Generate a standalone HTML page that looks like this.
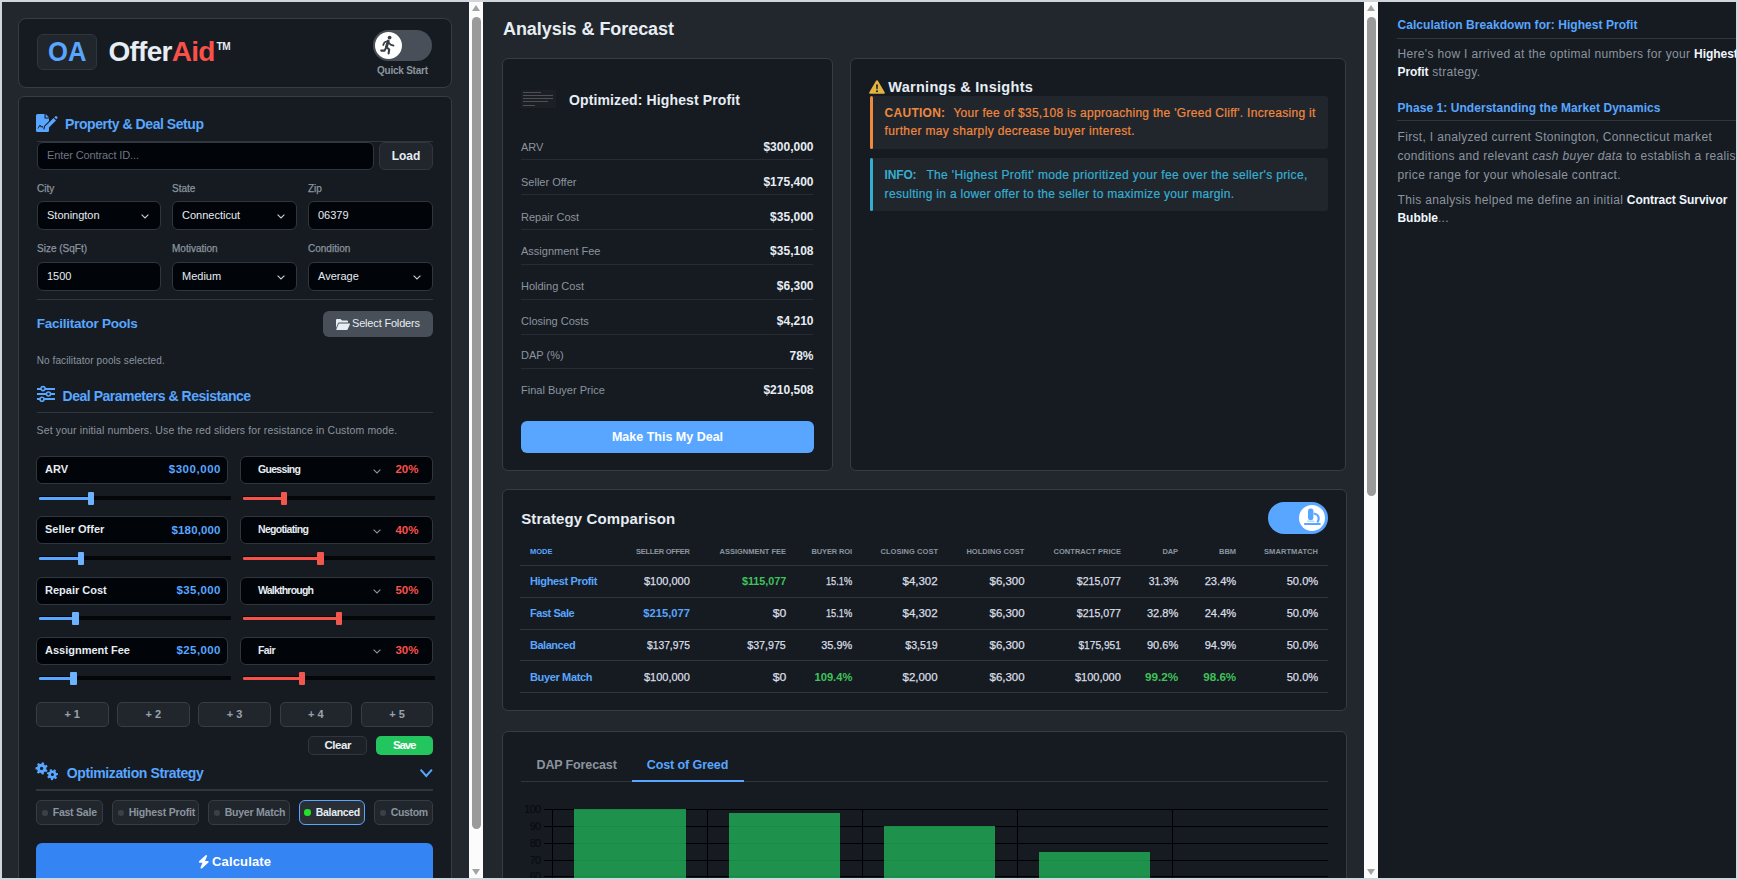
<!DOCTYPE html>
<html><head><meta charset="utf-8">
<style>
*{box-sizing:border-box;margin:0;padding:0}
html,body{width:1738px;height:880px;overflow:hidden}
body{background:#d1d6dd;font-family:"Liberation Sans",sans-serif;position:relative;color:#e6edf3}
.a{position:absolute}
.t{position:absolute;white-space:nowrap;line-height:1}
.sb{position:absolute;top:2px;width:14px;height:876px;background:#fcfcfc}
.thumb{position:absolute;left:3px;width:9px;border-radius:5px;background:#9a9a9a}
.up{position:absolute;left:3px;top:3px;width:0;height:0;border-left:4px solid transparent;border-right:4px solid transparent;border-bottom:6px solid #a3a3a3}
.dn{position:absolute;left:3px;bottom:3px;width:0;height:0;border-left:4px solid transparent;border-right:4px solid transparent;border-top:6px solid #a3a3a3}
.card{position:absolute;background:#161b22;border:1px solid #363c44;border-radius:8px}
svg{position:absolute;overflow:visible}
</style></head>
<body>

<div class="a" style="left:2px;top:2px;width:467px;height:876px;background:#22272e"></div>
<div class="a" style="left:483px;top:2px;width:881px;height:876px;background:#22272e"></div>
<div class="a" style="left:1378px;top:2px;width:358px;height:876px;background:#161b22"></div>
<div class="card" style="left:18px;top:18px;width:434px;height:70px"></div>
<div class="a" style="left:37px;top:34px;width:60px;height:36px;background:#21262d;border:1px solid #30363d;border-radius:6px"></div>
<div class="t" style="top:37.90px;font-size:28px;color:#58a6ff;font-weight:700;left:47.5px;transform:scaleX(0.915);transform-origin:0 0">OA</div>
<div class="t" style="top:37.90px;font-size:28px;color:#e6edf3;font-weight:700;left:108.5px;letter-spacing:-0.75px">Offer<span style="color:#f85149">Aid</span></div>
<div class="t" style="top:41.53px;font-size:10px;color:#e6edf3;font-weight:700;left:216.5px;letter-spacing:-0.3px">TM</div>
<div class="a" style="left:373px;top:30px;width:59px;height:31px;background:#484f58;border-radius:16px"></div>
<div class="a" style="left:375px;top:32px;width:27px;height:27px;background:#ffffff;border-radius:50%"></div>
<svg style="left:379px;top:34px" width="18" height="22" viewBox="379 34 18 22"><g fill="none" stroke="#3a3f46" stroke-linecap="round" stroke-linejoin="round"><circle cx="389.6" cy="37.6" r="1.9" fill="#3a3f46" stroke="none"/><path d="M388.3 41 L386.4 47" stroke-width="2.8"/><path d="M387.8 41 L384.6 42.2 L383.2 45" stroke-width="1.7"/><path d="M388.4 42.3 L390.6 44.6 L393.6 45.6" stroke-width="1.7"/><path d="M386.6 47.2 L389.2 49.6 L388.6 53.4" stroke-width="2.1"/><path d="M386.2 47.4 L384.6 50.6 L381.2 50.6" stroke-width="2.1"/></g></svg>
<div class="t" style="top:66.33px;font-size:10px;color:#8b949e;font-weight:700;letter-spacing:-0.235px;left:377px;">Quick Start</div>
<div class="card" style="left:18px;top:96px;width:434px;height:900px;border-radius:6px"></div>
<svg style="left:36px;top:114px" width="21" height="18" viewBox="0 0 21 18"><path fill="#58a6ff" d="M0 1.5 Q0 0 1.5 0 H8.5 L8.5 4.5 H13 V7 L8 12 L7.3 15.5 L10.8 14.8 L13 12.6 V16.5 Q13 18 11.5 18 H1.5 Q0 18 0 16.5 Z"/><path fill="#58a6ff" d="M9.6 0 L13 3.4 H9.6 Z"/><path fill="#161b22" d="M2 14.5 L4 11 L5.2 13.2 L6.2 12 L6.6 13.6" stroke="#161b22" stroke-width="0.9" fill-opacity="0"/><path fill="#58a6ff" d="M9 12.6 L17.5 4.1 L20 6.6 L11.5 15.1 L8.4 15.8 Z"/><path fill="#58a6ff" d="M18.3 3.3 L19.4 2.2 Q20 1.7 20.6 2.3 L21.4 3.1 Q21.9 3.7 21.3 4.3 L20.3 5.3 Z"/></svg>
<div class="t" style="top:116.95px;font-size:14px;color:#58a6ff;font-weight:700;letter-spacing:-0.441px;left:65px;">Property &amp; Deal Setup</div>
<div class="a" style="left:37px;top:141px;width:396px;height:1px;background:#30363d"></div>
<div class="a" style="left:37px;top:142px;width:337px;height:28px;background:#010409;border:1px solid #30363d;border-radius:6px"></div>
<div class="t" style="top:150.39px;font-size:11px;color:#6e7681;letter-spacing:-0.113px;left:47px;">Enter Contract ID...</div>
<div class="a" style="left:379px;top:142px;width:54px;height:28px;background:#21262d;border:1px solid #30363d;border-radius:6px"></div>
<div class="t" style="top:149.84px;font-size:12px;color:#e6edf3;font-weight:700;left:406px;transform:translateX(-50%);">Load</div>
<div class="t" style="top:184.13px;font-size:10px;color:#8b949e;left:37px;-webkit-text-stroke:0.25px #8b949e">City</div>
<div class="t" style="top:184.13px;font-size:10px;color:#8b949e;left:172px;-webkit-text-stroke:0.25px #8b949e">State</div>
<div class="t" style="top:184.13px;font-size:10px;color:#8b949e;left:308px;-webkit-text-stroke:0.25px #8b949e">Zip</div>
<div class="t" style="top:243.84px;font-size:10px;color:#8b949e;left:37px;-webkit-text-stroke:0.25px #8b949e">Size (SqFt)</div>
<div class="t" style="top:243.84px;font-size:10px;color:#8b949e;left:172px;-webkit-text-stroke:0.25px #8b949e">Motivation</div>
<div class="t" style="top:243.84px;font-size:10px;color:#8b949e;left:308px;-webkit-text-stroke:0.25px #8b949e">Condition</div>
<div class="a" style="left:37px;top:201px;width:124px;height:29px;background:#010409;border:1px solid #30363d;border-radius:6px"></div>
<div class="t" style="top:209.89px;font-size:11px;color:#e6edf3;left:47px;">Stonington</div>
<svg style="left:140.7px;top:213.8px" width="8" height="4.5" viewBox="0 0 8 4.5"><path d="M0.6 0.6 L4.0 3.9 L7.4 0.6" fill="none" stroke="#c9d1d9" stroke-width="1.1"/></svg>
<div class="a" style="left:172px;top:201px;width:125px;height:29px;background:#010409;border:1px solid #30363d;border-radius:6px"></div>
<div class="t" style="top:209.89px;font-size:11px;color:#e6edf3;left:182px;">Connecticut</div>
<svg style="left:276.7px;top:213.8px" width="8" height="4.5" viewBox="0 0 8 4.5"><path d="M0.6 0.6 L4.0 3.9 L7.4 0.6" fill="none" stroke="#c9d1d9" stroke-width="1.1"/></svg>
<div class="a" style="left:308px;top:201px;width:125px;height:29px;background:#010409;border:1px solid #30363d;border-radius:6px"></div>
<div class="t" style="top:209.89px;font-size:11px;color:#e6edf3;left:318px;">06379</div>
<div class="a" style="left:37px;top:262px;width:124px;height:29px;background:#010409;border:1px solid #30363d;border-radius:6px"></div>
<div class="t" style="top:270.89px;font-size:11px;color:#e6edf3;left:47px;">1500</div>
<div class="a" style="left:172px;top:262px;width:125px;height:29px;background:#010409;border:1px solid #30363d;border-radius:6px"></div>
<div class="t" style="top:270.89px;font-size:11px;color:#e6edf3;left:182px;">Medium</div>
<svg style="left:276.7px;top:274.8px" width="8" height="4.5" viewBox="0 0 8 4.5"><path d="M0.6 0.6 L4.0 3.9 L7.4 0.6" fill="none" stroke="#c9d1d9" stroke-width="1.1"/></svg>
<div class="a" style="left:308px;top:262px;width:125px;height:29px;background:#010409;border:1px solid #30363d;border-radius:6px"></div>
<div class="t" style="top:270.89px;font-size:11px;color:#e6edf3;left:318px;">Average</div>
<svg style="left:412.7px;top:274.8px" width="8" height="4.5" viewBox="0 0 8 4.5"><path d="M0.6 0.6 L4.0 3.9 L7.4 0.6" fill="none" stroke="#c9d1d9" stroke-width="1.1"/></svg>
<div class="a" style="left:37px;top:299px;width:396px;height:1px;background:#30363d"></div>
<div class="t" style="top:317.47px;font-size:13.5px;color:#58a6ff;font-weight:700;letter-spacing:-0.251px;left:36.7px;">Facilitator Pools</div>
<div class="a" style="left:323px;top:311px;width:110px;height:26px;background:#484f58;border-radius:6px"></div>
<svg style="left:335.5px;top:318.5px" width="14" height="11" viewBox="0 0 14 11"><path fill="#e6edf3" d="M0 1 Q0 0 1 0 H4.5 L6 1.5 H11 Q12 1.5 12 2.5 V3.5 H3.2 Q2.4 3.5 2 4.3 L0 9 Z"/><path fill="#e6edf3" d="M3.2 4.5 H13.6 Q14.3 4.5 14 5.2 L11.6 10.4 Q11.3 11 10.6 11 H0.6 Q0 11 0.3 10.4 L2.5 5.1 Q2.8 4.5 3.2 4.5 Z"/></svg>
<div class="t" style="top:318.39px;font-size:11px;color:#e6edf3;letter-spacing:-0.178px;left:352px;">Select Folders</div>
<div class="t" style="top:356.04px;font-size:10px;color:#8b949e;letter-spacing:0.101px;left:36.7px;">No facilitator pools selected.</div>
<svg style="left:37px;top:386px" width="18" height="16" viewBox="0 0 18 16"><g fill="none" stroke="#58a6ff" stroke-width="2"><path d="M0 3 H18 M0 8 H18 M0 13 H18"/></g><g fill="#161b22" stroke="#58a6ff" stroke-width="1.6"><circle cx="6" cy="2.6" r="2"/><circle cx="11.5" cy="8" r="2"/><circle cx="5" cy="13.2" r="2"/></g></svg>
<div class="t" style="top:388.95px;font-size:14px;color:#58a6ff;font-weight:700;letter-spacing:-0.484px;left:62.6px;">Deal Parameters &amp; Resistance</div>
<div class="a" style="left:37px;top:412px;width:396px;height:1px;background:#30363d"></div>
<div class="t" style="top:425.41px;font-size:10.5px;color:#8b949e;letter-spacing:0.122px;left:36.6px;">Set your initial numbers. Use the red sliders for resistance in Custom mode.</div>
<div class="a" style="left:36px;top:456.0px;width:192px;height:28px;background:#010409;border:1px solid #30363d;border-radius:6px"></div>
<div class="t" style="top:463.99px;font-size:11px;color:#e6edf3;font-weight:700;left:45px;">ARV</div>
<div class="t" style="top:464.27px;font-size:11.5px;color:#58a6ff;font-weight:700;letter-spacing:0.548px;right:1516.95px;">$300,000</div>
<div class="a" style="left:240px;top:456.0px;width:193px;height:28px;background:#010409;border:1px solid #30363d;border-radius:6px"></div>
<div class="t" style="top:464.01px;font-size:10.5px;color:#e6edf3;font-weight:700;letter-spacing:-0.692px;left:258px;">Guessing</div>
<svg style="left:372.5px;top:468.5px" width="8" height="4.5" viewBox="0 0 8 4.5"><path d="M0.6 0.6 L4.0 3.9 L7.4 0.6" fill="none" stroke="#8b949e" stroke-width="1.1"/></svg>
<div class="t" style="top:464.47px;font-size:11.5px;color:#f85149;font-weight:700;right:1319.50px;">20%</div>
<div class="a" style="left:39px;top:496.0px;width:191.5px;height:4px;background:#050608;border-radius:1px"></div>
<div class="a" style="left:39px;top:496.5px;width:52px;height:3px;background:#58a6ff;border-radius:1px"></div>
<div class="a" style="left:87.8px;top:491.5px;width:6.5px;height:13px;background:#6cb2ff;border-radius:1px"></div>
<div class="a" style="left:243px;top:496.0px;width:191.5px;height:4px;background:#050608;border-radius:1px"></div>
<div class="a" style="left:243px;top:496.5px;width:41px;height:3px;background:#f85149;border-radius:1px"></div>
<div class="a" style="left:280.8px;top:491.5px;width:6.5px;height:13px;background:#f2574e;border-radius:1px"></div>
<div class="a" style="left:36px;top:516.3px;width:192px;height:28px;background:#010409;border:1px solid #30363d;border-radius:6px"></div>
<div class="t" style="top:524.29px;font-size:11px;color:#e6edf3;font-weight:700;left:45px;">Seller Offer</div>
<div class="t" style="top:524.57px;font-size:11.5px;color:#58a6ff;font-weight:700;letter-spacing:0.148px;right:1517.35px;">$180,000</div>
<div class="a" style="left:240px;top:516.3px;width:193px;height:28px;background:#010409;border:1px solid #30363d;border-radius:6px"></div>
<div class="t" style="top:524.31px;font-size:10.5px;color:#e6edf3;font-weight:700;letter-spacing:-0.675px;left:258px;">Negotiating</div>
<svg style="left:372.5px;top:528.8px" width="8" height="4.5" viewBox="0 0 8 4.5"><path d="M0.6 0.6 L4.0 3.9 L7.4 0.6" fill="none" stroke="#8b949e" stroke-width="1.1"/></svg>
<div class="t" style="top:524.77px;font-size:11.5px;color:#f85149;font-weight:700;right:1319.50px;">40%</div>
<div class="a" style="left:39px;top:556.1px;width:191.5px;height:4px;background:#050608;border-radius:1px"></div>
<div class="a" style="left:39px;top:556.6px;width:42px;height:3px;background:#58a6ff;border-radius:1px"></div>
<div class="a" style="left:77.8px;top:551.6px;width:6.5px;height:13px;background:#6cb2ff;border-radius:1px"></div>
<div class="a" style="left:243px;top:556.1px;width:191.5px;height:4px;background:#050608;border-radius:1px"></div>
<div class="a" style="left:243px;top:556.6px;width:77.5px;height:3px;background:#f85149;border-radius:1px"></div>
<div class="a" style="left:317.3px;top:551.6px;width:6.5px;height:13px;background:#f2574e;border-radius:1px"></div>
<div class="a" style="left:36px;top:576.6px;width:192px;height:28px;background:#010409;border:1px solid #30363d;border-radius:6px"></div>
<div class="t" style="top:584.59px;font-size:11px;color:#e6edf3;font-weight:700;left:45px;">Repair Cost</div>
<div class="t" style="top:584.87px;font-size:11.5px;color:#58a6ff;font-weight:700;letter-spacing:0.405px;right:1517.10px;">$35,000</div>
<div class="a" style="left:240px;top:576.6px;width:193px;height:28px;background:#010409;border:1px solid #30363d;border-radius:6px"></div>
<div class="t" style="top:584.61px;font-size:10.5px;color:#e6edf3;font-weight:700;letter-spacing:-0.777px;left:258px;">Walkthrough</div>
<svg style="left:372.5px;top:589.1px" width="8" height="4.5" viewBox="0 0 8 4.5"><path d="M0.6 0.6 L4.0 3.9 L7.4 0.6" fill="none" stroke="#8b949e" stroke-width="1.1"/></svg>
<div class="t" style="top:585.07px;font-size:11.5px;color:#f85149;font-weight:700;right:1319.50px;">50%</div>
<div class="a" style="left:39px;top:616.2px;width:191.5px;height:4px;background:#050608;border-radius:1px"></div>
<div class="a" style="left:39px;top:616.7px;width:36.5px;height:3px;background:#58a6ff;border-radius:1px"></div>
<div class="a" style="left:72.3px;top:611.7px;width:6.5px;height:13px;background:#6cb2ff;border-radius:1px"></div>
<div class="a" style="left:243px;top:616.2px;width:191.5px;height:4px;background:#050608;border-radius:1px"></div>
<div class="a" style="left:243px;top:616.7px;width:96px;height:3px;background:#f85149;border-radius:1px"></div>
<div class="a" style="left:335.8px;top:611.7px;width:6.5px;height:13px;background:#f2574e;border-radius:1px"></div>
<div class="a" style="left:36px;top:636.9px;width:192px;height:28px;background:#010409;border:1px solid #30363d;border-radius:6px"></div>
<div class="t" style="top:644.89px;font-size:11px;color:#e6edf3;font-weight:700;left:45px;">Assignment Fee</div>
<div class="t" style="top:645.17px;font-size:11.5px;color:#58a6ff;font-weight:700;letter-spacing:0.405px;right:1517.10px;">$25,000</div>
<div class="a" style="left:240px;top:636.9px;width:193px;height:28px;background:#010409;border:1px solid #30363d;border-radius:6px"></div>
<div class="t" style="top:644.91px;font-size:10.5px;color:#e6edf3;font-weight:700;letter-spacing:-0.586px;left:258px;">Fair</div>
<svg style="left:372.5px;top:649.4px" width="8" height="4.5" viewBox="0 0 8 4.5"><path d="M0.6 0.6 L4.0 3.9 L7.4 0.6" fill="none" stroke="#8b949e" stroke-width="1.1"/></svg>
<div class="t" style="top:645.37px;font-size:11.5px;color:#f85149;font-weight:700;right:1319.50px;">30%</div>
<div class="a" style="left:39px;top:676.3px;width:191.5px;height:4px;background:#050608;border-radius:1px"></div>
<div class="a" style="left:39px;top:676.8px;width:34.5px;height:3px;background:#58a6ff;border-radius:1px"></div>
<div class="a" style="left:70.3px;top:671.8px;width:6.5px;height:13px;background:#6cb2ff;border-radius:1px"></div>
<div class="a" style="left:243px;top:676.3px;width:191.5px;height:4px;background:#050608;border-radius:1px"></div>
<div class="a" style="left:243px;top:676.8px;width:59px;height:3px;background:#f85149;border-radius:1px"></div>
<div class="a" style="left:298.8px;top:671.8px;width:6.5px;height:13px;background:#f2574e;border-radius:1px"></div>
<div class="a" style="left:36.0px;top:702px;width:72.5px;height:25px;background:#21262d;border:1px solid #373d45;border-radius:5px"></div>
<div class="t" style="top:709.19px;font-size:11px;color:#9aa3ad;font-weight:700;left:72.2px;transform:translateX(-50%);">+ 1</div>
<div class="a" style="left:117.2px;top:702px;width:72.5px;height:25px;background:#21262d;border:1px solid #373d45;border-radius:5px"></div>
<div class="t" style="top:709.19px;font-size:11px;color:#9aa3ad;font-weight:700;left:153.4px;transform:translateX(-50%);">+ 2</div>
<div class="a" style="left:198.4px;top:702px;width:72.5px;height:25px;background:#21262d;border:1px solid #373d45;border-radius:5px"></div>
<div class="t" style="top:709.19px;font-size:11px;color:#9aa3ad;font-weight:700;left:234.60000000000002px;transform:translateX(-50%);">+ 3</div>
<div class="a" style="left:279.6px;top:702px;width:72.5px;height:25px;background:#21262d;border:1px solid #373d45;border-radius:5px"></div>
<div class="t" style="top:709.19px;font-size:11px;color:#9aa3ad;font-weight:700;left:315.8px;transform:translateX(-50%);">+ 4</div>
<div class="a" style="left:360.8px;top:702px;width:72.5px;height:25px;background:#21262d;border:1px solid #373d45;border-radius:5px"></div>
<div class="t" style="top:709.19px;font-size:11px;color:#9aa3ad;font-weight:700;left:397.0px;transform:translateX(-50%);">+ 5</div>
<div class="a" style="left:308px;top:736px;width:59px;height:19px;background:#1c2128;border:1px solid #30363d;border-radius:5px"></div>
<div class="t" style="top:739.77px;font-size:11.5px;color:#e6edf3;font-weight:700;letter-spacing:-0.442px;left:324.5px;">Clear</div>
<div class="a" style="left:376px;top:736px;width:57px;height:19px;background:#23c55e;border-radius:5px"></div>
<div class="t" style="top:739.77px;font-size:11.5px;color:#ffffff;font-weight:700;letter-spacing:-1.120px;left:393px;">Save</div>
<svg style="left:34px;top:761px" width="26" height="21" viewBox="34 761 26 21"><path fill-rule="evenodd" fill="#58a6ff" d="M46.21 769.33 L47.54 770.17 L46.54 772.15 L45.08 771.56 L43.74 772.58 L43.92 774.15 L41.75 774.60 L41.29 773.09 L39.66 772.68 L38.55 773.80 L36.85 772.38 L37.74 771.08 L37.04 769.56 L35.48 769.38 L35.52 767.17 L37.10 767.06 L37.85 765.56 L37.02 764.23 L38.77 762.88 L39.84 764.04 L41.49 763.70 L42.00 762.21 L44.15 762.75 L43.91 764.31 L45.20 765.38 L46.69 764.86 L47.61 766.87 L46.24 767.66 Z M43.30 768.40 A1.7 1.7 0 1 0 39.90 768.40 A1.7 1.7 0 1 0 43.30 768.40 Z"/><path fill-rule="evenodd" fill="#58a6ff" d="M56.09 776.61 L57.05 777.71 L55.66 779.15 L54.53 778.22 L53.12 778.74 L52.87 780.18 L50.88 779.99 L50.90 778.52 L49.62 777.75 L48.33 778.44 L47.24 776.77 L48.40 775.87 L48.21 774.39 L46.86 773.81 L47.49 771.92 L48.91 772.26 L49.95 771.19 L49.56 769.77 L51.43 769.08 L52.05 770.41 L53.54 770.56 L54.40 769.37 L56.11 770.41 L55.45 771.72 L56.27 772.97 L57.74 772.90 L57.99 774.89 L56.56 775.19 Z M53.90 774.60 A1.5 1.5 0 1 0 50.90 774.60 A1.5 1.5 0 1 0 53.90 774.60 Z"/></svg>
<div class="t" style="top:766.15px;font-size:14px;color:#58a6ff;font-weight:700;letter-spacing:-0.384px;left:66.8px;">Optimization Strategy</div>
<svg style="left:420px;top:769px" width="12.5" height="7.5" viewBox="0 0 12.5 7.5"><path d="M0.6 0.6 L6.25 6.9 L11.9 0.6" fill="none" stroke="#58a6ff" stroke-width="2"/></svg>
<div class="a" style="left:36px;top:789px;width:397px;height:1.5px;background:#30363d"></div>
<div class="a" style="left:36px;top:800px;width:66.5px;height:25px;background:#21262d;border:1px solid #363c44;border-radius:5px"></div>
<div class="a" style="left:42px;top:810px;width:5.5px;height:5.5px;background:#3b4048;border-radius:50%"></div>
<div class="t" style="top:807.41px;font-size:10.5px;color:#8b949e;font-weight:700;letter-spacing:-0.226px;left:52.7px;">Fast Sale</div>
<div class="a" style="left:112px;top:800px;width:87px;height:25px;background:#21262d;border:1px solid #363c44;border-radius:5px"></div>
<div class="a" style="left:118px;top:810px;width:5.5px;height:5.5px;background:#3b4048;border-radius:50%"></div>
<div class="t" style="top:807.41px;font-size:10.5px;color:#8b949e;font-weight:700;letter-spacing:-0.172px;left:128.7px;">Highest Profit</div>
<div class="a" style="left:208px;top:800px;width:81.5px;height:25px;background:#21262d;border:1px solid #363c44;border-radius:5px"></div>
<div class="a" style="left:214px;top:810px;width:5.5px;height:5.5px;background:#3b4048;border-radius:50%"></div>
<div class="t" style="top:807.41px;font-size:10.5px;color:#8b949e;font-weight:700;letter-spacing:-0.222px;left:224.7px;">Buyer Match</div>
<div class="a" style="left:299px;top:800px;width:66px;height:25px;background:#2a2f36;border:1.5px solid #58a6ff;border-radius:6px"></div>
<div class="a" style="left:304px;top:809.2px;width:6.5px;height:6.5px;background:#22e32a;border-radius:50%"></div>
<div class="t" style="top:807.41px;font-size:10.5px;color:#e6edf3;font-weight:700;letter-spacing:-0.298px;left:315.7px;">Balanced</div>
<div class="a" style="left:374px;top:800px;width:59px;height:25px;background:#21262d;border:1px solid #363c44;border-radius:5px"></div>
<div class="a" style="left:380px;top:810px;width:5.5px;height:5.5px;background:#3b4048;border-radius:50%"></div>
<div class="t" style="top:807.41px;font-size:10.5px;color:#8b949e;font-weight:700;letter-spacing:-0.317px;left:390.7px;">Custom</div>
<div class="a" style="left:36px;top:843px;width:397px;height:50px;background:#3584f4;border-radius:6px"></div>
<svg style="left:198px;top:854.6px" width="11.5" height="13.6" viewBox="0 0 448 512" preserveAspectRatio="none"><path fill="#fff" d="M349.4 44.6c5.9-13.7 1.4-29.7-10.9-38.3s-28.6-8-40 1.6l-256 224c-10 8.8-13.6 22.9-8.9 35.3S50.7 288 64 288H175.5L98.6 467.4c-5.9 13.7-1.4 29.7 10.9 38.3s28.6 8 40-1.6l256-224c10-8.8 13.6-22.9 8.9-35.3s-16.6-20.7-30-20.7H272.5L349.4 44.6z"/></svg>
<div class="t" style="top:855.00px;font-size:13px;color:#ffffff;font-weight:700;letter-spacing:0.150px;left:212px;">Calculate</div>
<div class="t" style="top:19.96px;font-size:18px;color:#e6edf3;font-weight:700;letter-spacing:-0.060px;left:503px;">Analysis &amp; Forecast</div>
<div class="card" style="left:502px;top:58px;width:331px;height:413px;border-radius:6px"></div>
<div class="a" style="left:521px;top:90px;width:35px;height:18px;background:#1c1f24"></div>
<div class="a" style="left:523px;top:92px;width:18px;height:1.2px;background:#5a5e64;opacity:0.8"></div>
<div class="a" style="left:523px;top:95px;width:30px;height:1.2px;background:#5a5e64;opacity:0.8"></div>
<div class="a" style="left:523px;top:98px;width:30px;height:1.2px;background:#5a5e64;opacity:0.8"></div>
<div class="a" style="left:523px;top:101px;width:25px;height:1.2px;background:#5a5e64;opacity:0.8"></div>
<div class="a" style="left:523px;top:105px;width:12px;height:1.2px;background:#5a5e64;opacity:0.8"></div>
<div class="t" style="top:92.95px;font-size:14px;color:#e6edf3;font-weight:700;letter-spacing:0.125px;left:569px;">Optimized: Highest Profit</div>
<div class="t" style="top:142.09px;font-size:11px;color:#8b949e;left:521px;">ARV</div>
<div class="t" style="top:141.24px;font-size:12px;color:#e6edf3;font-weight:700;right:924.50px;">$300,000</div>
<div class="a" style="left:521px;top:159.0px;width:292px;height:1px;background:#262c34"></div>
<div class="t" style="top:176.81px;font-size:11px;color:#8b949e;left:521px;">Seller Offer</div>
<div class="t" style="top:175.96px;font-size:12px;color:#e6edf3;font-weight:700;right:924.50px;">$175,400</div>
<div class="a" style="left:521px;top:193.9px;width:292px;height:1px;background:#262c34"></div>
<div class="t" style="top:211.53px;font-size:11px;color:#8b949e;left:521px;">Repair Cost</div>
<div class="t" style="top:210.68px;font-size:12px;color:#e6edf3;font-weight:700;right:924.50px;">$35,000</div>
<div class="a" style="left:521px;top:228.8px;width:292px;height:1px;background:#262c34"></div>
<div class="t" style="top:246.25px;font-size:11px;color:#8b949e;left:521px;">Assignment Fee</div>
<div class="t" style="top:245.40px;font-size:12px;color:#e6edf3;font-weight:700;right:924.50px;">$35,108</div>
<div class="a" style="left:521px;top:263.7px;width:292px;height:1px;background:#262c34"></div>
<div class="t" style="top:280.97px;font-size:11px;color:#8b949e;left:521px;">Holding Cost</div>
<div class="t" style="top:280.12px;font-size:12px;color:#e6edf3;font-weight:700;right:924.50px;">$6,300</div>
<div class="a" style="left:521px;top:298.6px;width:292px;height:1px;background:#262c34"></div>
<div class="t" style="top:315.69px;font-size:11px;color:#8b949e;left:521px;">Closing Costs</div>
<div class="t" style="top:314.84px;font-size:12px;color:#e6edf3;font-weight:700;right:924.50px;">$4,210</div>
<div class="a" style="left:521px;top:333.5px;width:292px;height:1px;background:#262c34"></div>
<div class="t" style="top:350.41px;font-size:11px;color:#8b949e;left:521px;">DAP (%)</div>
<div class="t" style="top:349.56px;font-size:12px;color:#e6edf3;font-weight:700;right:924.50px;">78%</div>
<div class="a" style="left:521px;top:368.4px;width:292px;height:1px;background:#262c34"></div>
<div class="t" style="top:385.13px;font-size:11px;color:#8b949e;left:521px;">Final Buyer Price</div>
<div class="t" style="top:384.28px;font-size:12px;color:#e6edf3;font-weight:700;right:924.50px;">$210,508</div>
<div class="a" style="left:521px;top:421px;width:293px;height:32px;background:#58a6ff;border-radius:6px"></div>
<div class="t" style="top:430.52px;font-size:12.5px;color:#ffffff;font-weight:700;left:667.5px;transform:translateX(-50%);">Make This My Deal</div>
<div class="card" style="left:850px;top:58px;width:496px;height:413px;border-radius:6px"></div>
<svg style="left:869px;top:79.5px" width="16" height="14" viewBox="0 0 16 14"><path fill="#e3b341" d="M8 0.3 Q8.7 0.3 9.1 1 L15.8 12.6 Q16.2 13.6 15.1 13.8 H0.9 Q-0.2 13.6 0.2 12.6 L6.9 1 Q7.3 0.3 8 0.3 Z"/><path fill="#161b22" d="M7.1 4.5 H8.9 L8.6 9.3 H7.4 Z"/><circle cx="8" cy="11.3" r="1" fill="#161b22"/></svg>
<div class="t" style="top:79.93px;font-size:14.5px;color:#e6edf3;font-weight:700;letter-spacing:0.270px;left:888.3px;">Warnings &amp; Insights</div>
<div class="a" style="left:870px;top:96px;width:458px;height:53px;background:#21262d;border-radius:3px"></div>
<div class="a" style="left:870px;top:96px;width:3px;height:53px;background:#f0883e;border-radius:2px"></div>
<div class="t" style="top:107.44px;font-size:12px;color:#f0883e;font-weight:700;letter-spacing:0.263px;left:884.6px;">CAUTION:</div>
<div class="t" style="top:107.44px;font-size:12px;color:#f0883e;letter-spacing:0.301px;left:953.4px;-webkit-text-stroke:0.2px #f0883e">Your fee of $35,108 is approaching the 'Greed Cliff'. Increasing it</div>
<div class="t" style="top:125.04px;font-size:12px;color:#f0883e;letter-spacing:0.354px;left:884.6px;-webkit-text-stroke:0.2px #f0883e">further may sharply decrease buyer interest.</div>
<div class="a" style="left:870px;top:158px;width:458px;height:53px;background:#21262d;border-radius:3px"></div>
<div class="a" style="left:870px;top:158px;width:3px;height:53px;background:#36aed2;border-radius:2px"></div>
<div class="t" style="top:169.34px;font-size:12px;color:#36aed2;font-weight:700;letter-spacing:-0.165px;left:884.6px;">INFO:</div>
<div class="t" style="top:169.34px;font-size:12px;color:#36aed2;letter-spacing:0.361px;left:926.4px;-webkit-text-stroke:0.2px #36aed2">The 'Highest Profit' mode prioritized your fee over the seller's price,</div>
<div class="t" style="top:187.84px;font-size:12px;color:#36aed2;letter-spacing:0.306px;left:884.6px;-webkit-text-stroke:0.2px #36aed2">resulting in a lower offer to the seller to maximize your margin.</div>
<div class="card" style="left:502px;top:489px;width:845px;height:222px;border-radius:6px"></div>
<div class="t" style="top:510.60px;font-size:15px;color:#e6edf3;font-weight:700;letter-spacing:0.128px;left:521.2px;">Strategy Comparison</div>
<div class="a" style="left:1268px;top:502px;width:60px;height:32px;background:#58a6ff;border-radius:16px"></div>
<div class="a" style="left:1299px;top:505px;width:26px;height:26px;background:#ffffff;border-radius:50%"></div>
<svg style="left:1300px;top:505px" width="26" height="26" viewBox="1300 505 26 26"><g fill="#58a6ff"><rect x="1308" y="508.6" width="5.4" height="11.6" rx="2.7"/><path d="M1313.6 512.4 Q1319.8 513.2 1319.8 518.6 Q1319.8 521.4 1318 523 L1316.4 521.8 Q1317.6 520.6 1317.6 518.6 Q1317.6 515.2 1313.6 514.6 Z"/><rect x="1307" y="520.6" width="7.4" height="1.2" opacity="0.5"/><rect x="1304.2" y="523" width="16.4" height="2"/></g></svg>
<div class="t" style="top:547.85px;font-size:7.5px;color:#58a6ff;font-weight:700;letter-spacing:-0.000px;left:530px;">MODE</div>
<div class="t" style="top:547.85px;font-size:7.5px;color:#8b949e;font-weight:700;letter-spacing:-0.281px;right:1048.28px;">SELLER OFFER</div>
<div class="t" style="top:547.85px;font-size:7.5px;color:#8b949e;font-weight:700;letter-spacing:-0.013px;right:952.01px;">ASSIGNMENT FEE</div>
<div class="t" style="top:547.85px;font-size:7.5px;color:#8b949e;font-weight:700;letter-spacing:-0.146px;right:886.15px;">BUYER ROI</div>
<div class="t" style="top:547.85px;font-size:7.5px;color:#8b949e;font-weight:700;letter-spacing:0.038px;right:799.96px;">CLOSING COST</div>
<div class="t" style="top:547.85px;font-size:7.5px;color:#8b949e;font-weight:700;letter-spacing:0.046px;right:713.55px;">HOLDING COST</div>
<div class="t" style="top:547.85px;font-size:7.5px;color:#8b949e;font-weight:700;letter-spacing:0.032px;right:616.97px;">CONTRACT PRICE</div>
<div class="t" style="top:547.85px;font-size:7.5px;color:#8b949e;font-weight:700;letter-spacing:-0.168px;right:560.17px;">DAP</div>
<div class="t" style="top:547.85px;font-size:7.5px;color:#8b949e;font-weight:700;letter-spacing:-0.040px;right:502.04px;">BBM</div>
<div class="t" style="top:547.85px;font-size:7.5px;color:#8b949e;font-weight:700;letter-spacing:0.090px;right:419.91px;">SMARTMATCH</div>
<div class="a" style="left:520px;top:564.8px;width:808px;height:1.2px;background:#30363d"></div>
<div class="t" style="top:575.69px;font-size:11px;color:#58a6ff;font-weight:700;letter-spacing:-0.363px;left:530px;">Highest Profit</div>
<div class="t" style="top:575.69px;font-size:11px;color:#d9dee4;transform:scaleX(1.0024);transform-origin:100% 0;right:1048.00px;-webkit-text-stroke:0.25px #d9dee4">$100,000</div>
<div class="t" style="top:575.69px;font-size:11px;color:#3fc35a;font-weight:700;transform:scaleX(0.9800);transform-origin:100% 0;right:952.00px;">$115,077</div>
<div class="t" style="top:575.69px;font-size:11px;color:#d9dee4;transform:scaleX(0.8411);transform-origin:100% 0;right:886.00px;-webkit-text-stroke:0.25px #d9dee4">15.1%</div>
<div class="t" style="top:575.69px;font-size:11px;color:#d9dee4;transform:scaleX(1.0442);transform-origin:100% 0;right:800.00px;-webkit-text-stroke:0.25px #d9dee4">$4,302</div>
<div class="t" style="top:575.69px;font-size:11px;color:#d9dee4;transform:scaleX(1.0442);transform-origin:100% 0;right:713.60px;-webkit-text-stroke:0.25px #d9dee4">$6,300</div>
<div class="t" style="top:575.69px;font-size:11px;color:#d9dee4;transform:scaleX(0.9601);transform-origin:100% 0;right:617.00px;-webkit-text-stroke:0.25px #d9dee4">$215,077</div>
<div class="t" style="top:575.69px;font-size:11px;color:#d9dee4;transform:scaleX(0.9404);transform-origin:100% 0;right:560.00px;-webkit-text-stroke:0.25px #d9dee4">31.3%</div>
<div class="t" style="top:575.69px;font-size:11px;color:#d9dee4;transform:scaleX(1.0099);transform-origin:100% 0;right:502.00px;-webkit-text-stroke:0.25px #d9dee4">23.4%</div>
<div class="t" style="top:575.69px;font-size:11px;color:#d9dee4;transform:scaleX(1.0099);transform-origin:100% 0;right:420.00px;-webkit-text-stroke:0.25px #d9dee4">50.0%</div>
<div class="a" style="left:520px;top:597.0px;width:808px;height:1px;background:#30363d"></div>
<div class="t" style="top:607.69px;font-size:11px;color:#58a6ff;font-weight:700;letter-spacing:-0.450px;left:530px;">Fast Sale</div>
<div class="t" style="top:607.69px;font-size:11px;color:#58a6ff;font-weight:700;transform:scaleX(1.0158);transform-origin:100% 0;right:1048.00px;">$215,077</div>
<div class="t" style="top:607.69px;font-size:11px;color:#d9dee4;transform:scaleX(1.1115);transform-origin:100% 0;right:952.00px;-webkit-text-stroke:0.25px #d9dee4">$0</div>
<div class="t" style="top:607.69px;font-size:11px;color:#d9dee4;transform:scaleX(0.8411);transform-origin:100% 0;right:886.00px;-webkit-text-stroke:0.25px #d9dee4">15.1%</div>
<div class="t" style="top:607.69px;font-size:11px;color:#d9dee4;transform:scaleX(1.0442);transform-origin:100% 0;right:800.00px;-webkit-text-stroke:0.25px #d9dee4">$4,302</div>
<div class="t" style="top:607.69px;font-size:11px;color:#d9dee4;transform:scaleX(1.0442);transform-origin:100% 0;right:713.60px;-webkit-text-stroke:0.25px #d9dee4">$6,300</div>
<div class="t" style="top:607.69px;font-size:11px;color:#d9dee4;transform:scaleX(0.9601);transform-origin:100% 0;right:617.00px;-webkit-text-stroke:0.25px #d9dee4">$215,077</div>
<div class="t" style="top:607.69px;font-size:11px;color:#d9dee4;transform:scaleX(1.0033);transform-origin:100% 0;right:560.00px;-webkit-text-stroke:0.25px #d9dee4">32.8%</div>
<div class="t" style="top:607.69px;font-size:11px;color:#d9dee4;transform:scaleX(1.0099);transform-origin:100% 0;right:502.00px;-webkit-text-stroke:0.25px #d9dee4">24.4%</div>
<div class="t" style="top:607.69px;font-size:11px;color:#d9dee4;transform:scaleX(1.0099);transform-origin:100% 0;right:420.00px;-webkit-text-stroke:0.25px #d9dee4">50.0%</div>
<div class="a" style="left:520px;top:628.7px;width:808px;height:1px;background:#30363d"></div>
<div class="t" style="top:639.69px;font-size:11px;color:#58a6ff;font-weight:700;letter-spacing:-0.473px;left:530px;">Balanced</div>
<div class="t" style="top:639.69px;font-size:11px;color:#d9dee4;transform:scaleX(0.9356);transform-origin:100% 0;right:1048.00px;-webkit-text-stroke:0.25px #d9dee4">$137,975</div>
<div class="t" style="top:639.69px;font-size:11px;color:#d9dee4;transform:scaleX(0.9697);transform-origin:100% 0;right:952.00px;-webkit-text-stroke:0.25px #d9dee4">$37,975</div>
<div class="t" style="top:639.69px;font-size:11px;color:#d9dee4;transform:scaleX(0.9934);transform-origin:100% 0;right:886.00px;-webkit-text-stroke:0.25px #d9dee4">35.9%</div>
<div class="t" style="top:639.69px;font-size:11px;color:#d9dee4;transform:scaleX(0.9616);transform-origin:100% 0;right:800.00px;-webkit-text-stroke:0.25px #d9dee4">$3,519</div>
<div class="t" style="top:639.69px;font-size:11px;color:#d9dee4;transform:scaleX(1.0442);transform-origin:100% 0;right:713.60px;-webkit-text-stroke:0.25px #d9dee4">$6,300</div>
<div class="t" style="top:639.69px;font-size:11px;color:#d9dee4;transform:scaleX(0.9245);transform-origin:100% 0;right:617.00px;-webkit-text-stroke:0.25px #d9dee4">$175,951</div>
<div class="t" style="top:639.69px;font-size:11px;color:#d9dee4;transform:scaleX(1.0033);transform-origin:100% 0;right:560.00px;-webkit-text-stroke:0.25px #d9dee4">90.6%</div>
<div class="t" style="top:639.69px;font-size:11px;color:#d9dee4;transform:scaleX(1.0099);transform-origin:100% 0;right:502.00px;-webkit-text-stroke:0.25px #d9dee4">94.9%</div>
<div class="t" style="top:639.69px;font-size:11px;color:#d9dee4;transform:scaleX(1.0099);transform-origin:100% 0;right:420.00px;-webkit-text-stroke:0.25px #d9dee4">50.0%</div>
<div class="a" style="left:520px;top:660.4px;width:808px;height:1px;background:#30363d"></div>
<div class="t" style="top:671.69px;font-size:11px;color:#58a6ff;font-weight:700;letter-spacing:-0.352px;left:530px;">Buyer Match</div>
<div class="t" style="top:671.69px;font-size:11px;color:#d9dee4;transform:scaleX(1.0024);transform-origin:100% 0;right:1048.00px;-webkit-text-stroke:0.25px #d9dee4">$100,000</div>
<div class="t" style="top:671.69px;font-size:11px;color:#d9dee4;transform:scaleX(1.1115);transform-origin:100% 0;right:952.00px;-webkit-text-stroke:0.25px #d9dee4">$0</div>
<div class="t" style="top:671.69px;font-size:11px;color:#3fc35a;font-weight:700;transform:scaleX(1.0133);transform-origin:100% 0;right:886.00px;">109.4%</div>
<div class="t" style="top:671.69px;font-size:11px;color:#d9dee4;transform:scaleX(1.0442);transform-origin:100% 0;right:800.00px;-webkit-text-stroke:0.25px #d9dee4">$2,000</div>
<div class="t" style="top:671.69px;font-size:11px;color:#d9dee4;transform:scaleX(1.0442);transform-origin:100% 0;right:713.60px;-webkit-text-stroke:0.25px #d9dee4">$6,300</div>
<div class="t" style="top:671.69px;font-size:11px;color:#d9dee4;transform:scaleX(1.0024);transform-origin:100% 0;right:617.00px;-webkit-text-stroke:0.25px #d9dee4">$100,000</div>
<div class="t" style="top:671.69px;font-size:11px;color:#3fc35a;font-weight:700;transform:scaleX(1.0662);transform-origin:100% 0;right:560.00px;">99.2%</div>
<div class="t" style="top:671.69px;font-size:11px;color:#3fc35a;font-weight:700;transform:scaleX(1.0563);transform-origin:100% 0;right:502.00px;">98.6%</div>
<div class="t" style="top:671.69px;font-size:11px;color:#d9dee4;transform:scaleX(1.0099);transform-origin:100% 0;right:420.00px;-webkit-text-stroke:0.25px #d9dee4">50.0%</div>
<div class="a" style="left:520px;top:692.1px;width:808px;height:1px;background:#30363d"></div>
<div class="card" style="left:502px;top:731px;width:845px;height:300px;border-radius:6px"></div>
<div class="t" style="top:759.22px;font-size:12.5px;color:#8b949e;font-weight:700;letter-spacing:-0.132px;left:536.5px;">DAP Forecast</div>
<div class="t" style="top:759.22px;font-size:12.5px;color:#58a6ff;font-weight:700;letter-spacing:-0.096px;left:646.8px;">Cost of Greed</div>
<div class="a" style="left:521px;top:780.5px;width:807px;height:1px;background:#30363d"></div>
<div class="a" style="left:632px;top:780px;width:112px;height:2.2px;background:#58a6ff"></div>
<div class="t" style="top:804.09px;font-size:11px;color:#0b0c0e;right:1197.50px;letter-spacing:-0.7px;-webkit-text-stroke:0.2px #0b0c0e">100</div>
<div class="a" style="left:544px;top:809.0px;width:784px;height:1px;background:#000"></div>
<div class="t" style="top:820.94px;font-size:11px;color:#0b0c0e;right:1197.50px;letter-spacing:-0.7px;-webkit-text-stroke:0.2px #0b0c0e">90</div>
<div class="a" style="left:544px;top:825.85px;width:784px;height:1px;background:#000"></div>
<div class="t" style="top:837.79px;font-size:11px;color:#0b0c0e;right:1197.50px;letter-spacing:-0.7px;-webkit-text-stroke:0.2px #0b0c0e">80</div>
<div class="a" style="left:544px;top:842.7px;width:784px;height:1px;background:#000"></div>
<div class="t" style="top:854.64px;font-size:11px;color:#0b0c0e;right:1197.50px;letter-spacing:-0.7px;-webkit-text-stroke:0.2px #0b0c0e">70</div>
<div class="a" style="left:544px;top:859.55px;width:784px;height:1px;background:#000"></div>
<div class="t" style="top:871.49px;font-size:11px;color:#0b0c0e;right:1197.50px;letter-spacing:-0.7px;-webkit-text-stroke:0.2px #0b0c0e">60</div>
<div class="a" style="left:544px;top:876.4px;width:784px;height:1px;background:#000"></div>
<div class="a" style="left:551.5px;top:809px;width:1px;height:80px;background:#000"></div>
<div class="a" style="left:706.5px;top:809px;width:1px;height:80px;background:#000"></div>
<div class="a" style="left:861.5px;top:809px;width:1px;height:80px;background:#000"></div>
<div class="a" style="left:1016.5px;top:809px;width:1px;height:80px;background:#000"></div>
<div class="a" style="left:1171.5px;top:809px;width:1px;height:80px;background:#000"></div>
<div class="a" style="left:574px;top:809px;width:111.5px;height:100px;background:rgba(34,197,94,0.7)"></div>
<div class="a" style="left:729px;top:812.5px;width:111px;height:100px;background:rgba(34,197,94,0.7)"></div>
<div class="a" style="left:883.6px;top:826px;width:111.39999999999998px;height:100px;background:rgba(34,197,94,0.7)"></div>
<div class="a" style="left:1039px;top:852px;width:111.29999999999995px;height:100px;background:rgba(34,197,94,0.7)"></div>
<div class="t" style="top:18.59px;font-size:12px;color:#58a6ff;font-weight:700;letter-spacing:0.049px;left:1397.5px;">Calculation Breakdown for: Highest Profit</div>
<div class="a" style="left:1397px;top:38px;width:360px;height:1.2px;background:#30363d"></div>
<div class="t" style="top:48.04px;font-size:12px;color:#8b949e;left:1397.5px;letter-spacing:0.33px"><span style="color:#8b949e;">Here's how I arrived at the optimal numbers for your </span><span style="color:#f0f6fc;font-weight:700;letter-spacing:-0.05px;">Highest</span></div>
<div class="t" style="top:66.14px;font-size:12px;color:#8b949e;left:1397.5px;letter-spacing:0.33px"><span style="color:#f0f6fc;font-weight:700;letter-spacing:-0.05px;">Profit</span><span style="color:#8b949e;"> strategy.</span></div>
<div class="t" style="top:101.84px;font-size:12px;color:#58a6ff;font-weight:700;letter-spacing:0.055px;left:1397.5px;">Phase 1: Understanding the Market Dynamics</div>
<div class="a" style="left:1397px;top:120px;width:360px;height:1.2px;background:#30363d"></div>
<div class="t" style="top:130.94px;font-size:12px;color:#8b949e;left:1397.5px;letter-spacing:0.33px"><span style="color:#8b949e;">First, I analyzed current Stonington, Connecticut market</span></div>
<div class="t" style="top:149.84px;font-size:12px;color:#8b949e;left:1397.5px;letter-spacing:0.33px"><span style="color:#8b949e;">conditions and relevant </span><span style="color:#8b949e;font-style:italic;">cash buyer data</span><span style="color:#8b949e;"> to establish a realistic</span></div>
<div class="t" style="top:168.74px;font-size:12px;color:#8b949e;left:1397.5px;letter-spacing:0.33px"><span style="color:#8b949e;">price range for your wholesale contract.</span></div>
<div class="t" style="top:194.04px;font-size:12px;color:#8b949e;left:1397.5px;letter-spacing:0.33px"><span style="color:#8b949e;">This analysis helped me define an initial </span><span style="color:#f0f6fc;font-weight:700;letter-spacing:-0.05px;">Contract Survivor</span></div>
<div class="t" style="top:212.44px;font-size:12px;color:#8b949e;left:1397.5px;letter-spacing:0.33px"><span style="color:#f0f6fc;font-weight:700;letter-spacing:-0.05px;">Bubble</span><span style="color:#8b949e;">...</span></div>
<div class="sb" style="left:469px"><div class="up"></div><div class="thumb" style="top:15px;height:812px"></div><div class="dn"></div></div>
<div class="sb" style="left:1364px"><div class="up"></div><div class="thumb" style="top:15px;height:479px"></div><div class="dn"></div></div>
<div class="a" style="left:0px;top:0px;width:1738px;height:2px;background:#d1d6dd;z-index:10"></div>
<div class="a" style="left:0px;top:878px;width:1738px;height:2px;background:#d1d6dd;z-index:10"></div>
<div class="a" style="left:0px;top:0px;width:2px;height:880px;background:#d1d6dd;z-index:10"></div>
<div class="a" style="left:1736px;top:0px;width:2px;height:880px;background:#d1d6dd;z-index:10"></div>
</body></html>
